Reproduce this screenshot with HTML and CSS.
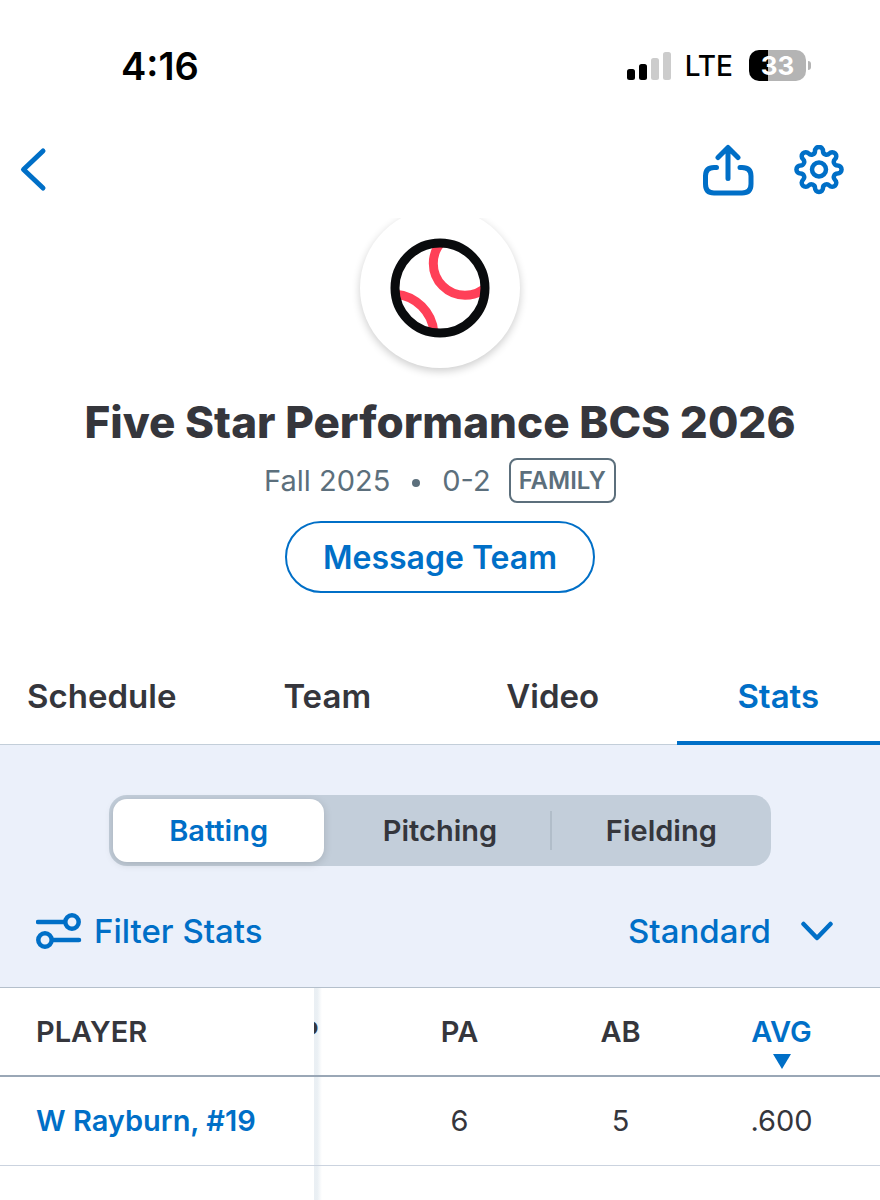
FILE: index.html
```html
<!DOCTYPE html>
<html lang="en">
<head>
    <meta charset="UTF-8">
    <meta name="viewport" content="width=device-width, initial-scale=1">
    <title>Five Star Performance BCS 2026</title>
    <link rel="stylesheet" href="styles.css">
</head>
<body>
<div class="page">
    <div class="statusBar">
        <span class="time">4:16</span>
        <div class="statusRight">
            <svg class="signal" width="44" height="28" viewBox="0 0 44 28">
                <rect x="0" y="17" width="8" height="11" rx="2.5"/>
                <rect x="12" y="12" width="8" height="16" rx="2.5"/>
                <rect class="signalOff" x="24" y="6" width="8" height="22" rx="2.5"/>
                <rect class="signalOff" x="36" y="0" width="8" height="28" rx="2.5"/>
            </svg>
            <span class="network">LTE</span>
            <div class="battery">33</div>
        </div>
    </div>

    <header class="navBar">
        <button class="iconBtn" type="button" aria-label="Back">
            <svg width="30" height="50" viewBox="0 0 30 50">
                <path d="M24 6 L4.500 24.500 L24 43"/>
            </svg>
        </button>
        <div class="navActions">
            <button class="iconBtn" type="button" aria-label="Share">
                <svg width="52" height="52" viewBox="0 0 52 52">
                    <path d="M14.500 23.500 H12 Q3.500 23.500 3.500 32 V40 Q3.500 49 12 49 H40 Q49 49 49 40 V32 Q49 23.500 40 23.500 H38"/>
                    <path d="M26 34.500 V4 M16 13.500 L26 3.500 L36 13.500"/>
                </svg>
            </button>
            <button class="iconBtn" type="button" aria-label="Settings">
                <svg class="gear" width="50" height="50" viewBox="-25 -25 50 50">
                    <circle cx="0" cy="-0.5" r="7"/>
                    <path transform="translate(0 -0.5)" d="M18.580 -4 A4 4 0 1 1 18.580 4
                        A3.650 3.650 0 0 0 15.960 10.310 A4 4 0 1 1 10.310 15.960
                        A3.650 3.650 0 0 0 4 18.580 A4 4 0 1 1 -4 18.580
                        A3.650 3.650 0 0 0 -10.310 15.960 A4 4 0 1 1 -15.960 10.310
                        A3.650 3.650 0 0 0 -18.580 4 A4 4 0 1 1 -18.580 -4
                        A3.650 3.650 0 0 0 -15.960 -10.310 A4 4 0 1 1 -10.310 -15.960
                        A3.650 3.650 0 0 0 -4 -18.580 A4 4 0 1 1 4 -18.580
                        A3.650 3.650 0 0 0 10.310 -15.960 A4 4 0 1 1 15.960 -10.310
                        A3.650 3.650 0 0 0 18.580 -4 Z"/>
                </svg>
            </button>
        </div>
    </header>

    <section class="hero">
        <div class="avatar">
            <svg width="100" height="100" viewBox="-50 -50 100 100">
                <clipPath id="ballClip"><circle cx="0" cy="0" r="44"/></clipPath>
                <g class="seams" clip-path="url(#ballClip)">
                    <circle cx="25" cy="-24.500" r="31.700"/>
                    <circle cx="-48" cy="48" r="42"/>
                </g>
                <circle class="ball" cx="0" cy="0" r="45"/>
            </svg>
        </div>
        <h1 class="teamName">Five Star Performance BCS 2026</h1>
        <div class="teamInfo">
            <span>Fall 2025</span>
            <i class="dot"></i>
            <span>0-2</span>
            <span class="badge">FAMILY</span>
        </div>
        <button class="messageBtn" type="button">Message Team</button>
    </section>

    <nav class="tabs">
        <a class="tab" href="#schedule">Schedule</a>
        <a class="tab" href="#team">Team</a>
        <a class="tab" href="#video">Video</a>
        <a class="tab active" href="#stats" aria-current="page">Stats</a>
    </nav>

    <section class="controls">
        <div class="segment">
            <button class="segmentBtn active" type="button">Batting</button>
            <button class="segmentBtn" type="button">Pitching</button>
            <button class="segmentBtn divided" type="button">Fielding</button>
        </div>
        <div class="filters">
            <button class="filterBtn" type="button">
                <svg width="46" height="36" viewBox="0 0 46 36">
                    <path d="M2 9 H27 M18 27 H43"/>
                    <circle cx="36" cy="9" r="6.700"/>
                    <circle cx="9" cy="27" r="6.700"/>
                </svg>
                Filter Stats
            </button>
            <div class="selectWrap">
                <select class="viewSelect" aria-label="Stat view">
                    <option>Standard</option>
                </select>
                <svg class="chevron" width="32" height="20" viewBox="0 0 32 20">
                    <path d="M2.500 3 L16 17 L29.500 3"/>
                </svg>
            </div>
        </div>
    </section>

    <div class="tableWrap">
        <table class="stats">
            <thead>
                <tr>
                    <th class="player">PLAYER</th>
                    <th class="cut"><div class="cutInner"><span>GP</span></div></th>
                    <th class="num">PA</th>
                    <th class="num">AB</th>
                    <th class="num last sorted">AVG</th>
                </tr>
            </thead>
            <tbody>
                <tr>
                    <td class="player"><a href="#player">W Rayburn, #19</a></td>
                    <td></td>
                    <td class="num">6</td>
                    <td class="num">5</td>
                    <td class="num last">.600</td>
                </tr>
            </tbody>
        </table>
    </div>
</div>
</body>
</html>
```

FILE: styles.css
```css
*{
    box-sizing: border-box;
}
body,h1{
    padding: 0;
    margin: 0;
}
body{
    background: #fff;
    color: #35363c;
    font-family: Inter, "Liberation Sans", sans-serif;
}
button,select{
    font-family: inherit;
    padding: 0;
    border: 0;
    background: none;
    cursor: pointer;
}
a{
    color: inherit;
    text-decoration: none;
}
svg{
    display: block;
    fill: none;
    stroke: #006fc7;
    stroke-width: 5;
    stroke-linecap: round;
    stroke-linejoin: round;
}
.page{
    min-height: 100vh;
    display: flex;
    flex-direction: column;
}

/* status bar */
.statusBar{
    height: 131px;
    padding: 0 69px 0 121px;
    display: flex;
    align-items: center;
    justify-content: space-between;
    color: #000;
}
.time{
    font-size: 38px;
    font-weight: 600;
}
.statusRight{
    display: flex;
    align-items: center;
}
.signal{
    fill: #000;
    stroke: none;
}
.signalOff{
    fill: #ccc;
}
.network{
    margin: 0 16px 0 14px;
    font-size: 28px;
    font-weight: 500;
}
.battery{
    position: relative;
    width: 57px;
    height: 31px;
    margin-right: 5px;
    border-radius: 10px;
    background: linear-gradient(90deg, #000 19px, #b4b4b4 19px);
    color: #fff;
    font-size: 26px;
    font-weight: 700;
    line-height: 31px;
    text-align: center;
}
.battery:after{
    content: "";
    position: absolute;
    right: -5px;
    top: 11px;
    width: 3px;
    height: 9px;
    border-radius: 0 4px 4px 0;
    background: #b4b4b4;
}

/* nav */
.navBar{
    height: 87px;
    padding: 0 36px 10px 19px;
    display: flex;
    align-items: center;
    justify-content: space-between;
}
.navActions{
    display: flex;
    align-items: center;
    gap: 40px;
}
.gear{
    stroke-width: 4.5;
}

/* team */
.hero{
    overflow: hidden;
    display: flex;
    flex-direction: column;
    align-items: center;
}
.avatar{
    width: 160px;
    height: 160px;
    margin-top: -10px;
    border-radius: 50%;
    box-shadow: 0 3px 8px rgba(0,0,0,0.2);
    display: flex;
    align-items: center;
    justify-content: center;
}
.ball{
    stroke: #090b0d;
    stroke-width: 9;
}
.seams{
    stroke: #ff4058;
    stroke-width: 9;
}
.teamName{
    margin-top: 26px;
    font-size: 44px;
    font-weight: 800;
    line-height: 56px;
    text-align: center;
}
.teamInfo{
    margin-top: 8px;
    height: 45px;
    display: flex;
    align-items: center;
    color: #5c6f7c;
    font-size: 29px;
}
.dot{
    width: 8px;
    height: 8px;
    margin: 4px 22px 0;
    border-radius: 50%;
    background: #5c6f7c;
}
.badge{
    height: 45px;
    margin-left: 18px;
    padding: 0 8px;
    border: 2px solid #5c6f7c;
    border-radius: 8px;
    font-size: 24px;
    font-weight: 600;
    line-height: 41px;
}
.messageBtn{
    height: 72px;
    margin: 18px 0 56px;
    padding: 0 36px;
    border: 2px solid #006fc7;
    border-radius: 36px;
    color: #006fc7;
    font-size: 32px;
    font-weight: 600;
}

/* tabs */
.tabs{
    display: grid;
    grid-template-columns: repeat(4, 1fr);
    column-gap: 22px;
    border-bottom: 1px solid #c3ced9;
}
.tab{
    height: 96px;
    margin-bottom: -1px;
    border-bottom: 4px solid transparent;
    font-size: 33px;
    font-weight: 600;
    line-height: 94px;
    text-align: center;
}
.tab.active{
    border-color: #006fc7;
    color: #006fc7;
}

/* stat controls */
.controls{
    padding-top: 50px;
    background: #ebf0fa;
    border-bottom: 1px solid #b4bfcb;
}
.segment{
    height: 71px;
    margin: 0 109px;
    padding: 4px;
    display: grid;
    grid-template-columns: repeat(3, 1fr);
    column-gap: 10px;
    border-radius: 18px;
    background: #c3ceda;
}
.segmentBtn{
    position: relative;
    border-radius: 14px;
    color: #35363c;
    font-size: 29px;
    font-weight: 600;
}
.segmentBtn.active{
    background: #fff;
    box-shadow: 0 2px 8px rgba(0,0,0,0.15);
    color: #006fc7;
}
.segmentBtn.divided:before{
    content: "";
    position: absolute;
    left: -6px;
    top: 12px;
    bottom: 12px;
    width: 2px;
    background: #b1bdc9;
}
.filters{
    height: 121px;
    padding: 8px 47px 0 36px;
    display: flex;
    align-items: center;
    justify-content: space-between;
}
.filterBtn{
    display: flex;
    align-items: center;
    gap: 12px;
    color: #006fc7;
    font-size: 33px;
    font-weight: 500;
}
.filterBtn svg{
    stroke-width: 4.5;
}
.selectWrap{
    position: relative;
}
.viewSelect{
    -webkit-appearance: none;
    appearance: none;
    padding-right: 62px;
    color: #006fc7;
    font-size: 33px;
    font-weight: 500;
}
.chevron{
    position: absolute;
    right: 0;
    top: 50%;
    margin-top: -10px;
    stroke-width: 4.5;
    pointer-events: none;
}

/* table */
.tableWrap{
    position: relative;
    z-index: 0;
    flex: 1;
    overflow: hidden;
}
/* edge of the fixed player column */
.tableWrap:after{
    content: "";
    position: absolute;
    z-index: -1;
    top: 0;
    bottom: 0;
    left: 314px;
    width: 8px;
    background: linear-gradient(90deg, rgba(195,210,222,0.35) 40%, rgba(195,210,222,0));
}
.stats{
    width: 100%;
    table-layout: fixed;
    border-collapse: separate;
    border-spacing: 0;
    font-size: 29px;
}
.stats th,.stats td{
    height: 89px;
    padding: 0;
    border-bottom: 1px solid #cbd3df;
    line-height: 36px;
}
.stats th{
    border-bottom: 2px solid #9aa7b6;
    font-weight: 600;
}
.stats .player{
    width: 314px;
    padding-left: 36px;
    text-align: left;
}
.player a{
    color: #006fc7;
    font-weight: 600;
}
.cutInner{
    overflow: hidden;
    display: flex;
    justify-content: flex-end;
}
.cutInner span{
    width: 161px;
    flex-shrink: 0;
}
.stats .num{
    width: 161px;
    text-align: center;
}
.stats .last{
    width: 179px;
    padding-right: 18px;
}
.stats .sorted{
    position: relative;
    color: #006fc7;
}
.sorted:after{
    content: "";
    position: absolute;
    left: 72px;
    bottom: 6px;
    border: 9px solid transparent;
    border-top: 15px solid #006fc7;
    border-bottom: 0;
}
```
